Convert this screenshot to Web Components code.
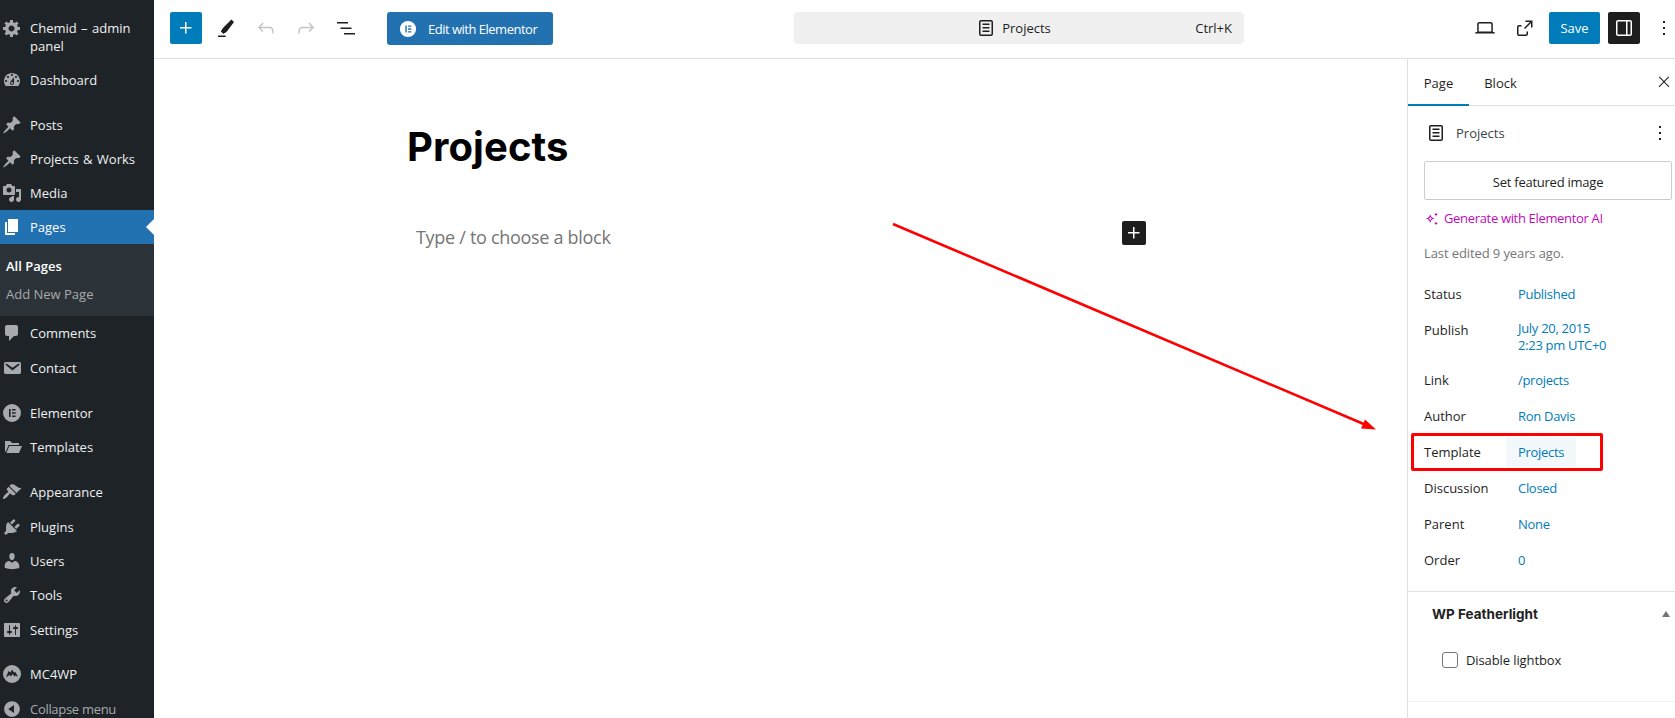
<!DOCTYPE html>
<html lang="en">
<head>
<meta charset="utf-8">
<title>Edit Page</title>
<style>
html, body { margin: 0; height: 718px; overflow: hidden; background: #fff; }
</style>
</head>
<body>
<edit-page></edit-page>
<script>
const ICONS = {
    gear: "M18 12h-2.18c-.17.7-.44 1.35-.81 1.93l1.54 1.54-2.1 2.1-1.54-1.54c-.58.36-1.23.63-1.91.79V19H8v-2.18c-.68-.16-1.33-.43-1.91-.79l-1.54 1.54-2.12-2.12 1.54-1.54c-.36-.58-.63-1.23-.79-1.91H1V9.03h2.17c.16-.7.44-1.35.8-1.94L2.43 5.55l2.1-2.1 1.54 1.54c.58-.37 1.24-.64 1.93-.81V2h3v2.18c.68.16 1.33.43 1.91.79l1.54-1.54 2.12 2.12-1.54 1.54c.36.59.64 1.24.8 1.94H18V12zm-8.5 1.5c1.66 0 3-1.34 3-3s-1.34-3-3-3-3 1.34-3 3 1.34 3 3 3z",
    dashboard: "M3.76 16h12.48c1.1-1.37 1.76-3.11 1.76-5 0-4.42-3.58-8-8-8s-8 3.58-8 8c0 1.89.66 3.63 1.76 5zM10 4c.55 0 1 .45 1 1s-.45 1-1 1-1-.45-1-1 .45-1 1-1zM6 6c.55 0 1 .45 1 1s-.45 1-1 1-1-.45-1-1 .45-1 1-1zm8 0c.55 0 1 .45 1 1s-.45 1-1 1-1-.45-1-1 .45-1 1-1zm-5.37 5.55L12 7v6c0 1.1-.9 2-2 2s-2-.9-2-2c0-.57.24-1.08.63-1.45zM4 10c.55 0 1 .45 1 1s-.45 1-1 1-1-.45-1-1 .45-1 1-1zm12 0c.55 0 1 .45 1 1s-.45 1-1 1-1-.45-1-1 .45-1 1-1zm-5 3c0-.55-.45-1-1-1s-1 .45-1 1 .45 1 1 1 1-.45 1-1z",
    pin: "M10.44 3.02l1.82-1.82 6.36 6.35-1.83 1.82c-1.05-.68-2.48-.57-3.41.36l-.75.75c-.92.93-1.04 2.35-.35 3.41l-1.83 1.82-2.41-2.41-2.8 2.79c-.42.42-3.38 2.71-3.8 2.29s1.86-3.39 2.28-3.81l2.79-2.79L4.1 9.36l1.83-1.82c1.05.69 2.48.57 3.4-.36l.75-.75c.93-.92 1.05-2.35.36-3.41z",
    media: "M13 11V4c0-.55-.45-1-1-1h-1.67L9 1H5L3.67 3H2c-.55 0-1 .45-1 1v7c0 .55.45 1 1 1h10c.55 0 1-.45 1-1zM7 4.5c1.38 0 2.5 1.12 2.5 2.5S8.38 9.5 7 9.5 4.5 8.38 4.5 7 5.62 4.5 7 4.5zM14 6h5v10.5c0 1.38-1.12 2.5-2.5 2.5S14 17.88 14 16.5s1.12-2.5 2.5-2.5c.17 0 .34.02.5.05V9h-3V6zm-4 8.05V13h2v3.5c0 1.38-1.12 2.5-2.5 2.5S7 17.88 7 16.5 8.12 14 9.5 14c.17 0 .34.02.5.05z",
    page: "M6 15V2h10v13H6zm-1 1h8v2H3V5h2v11z",
    comment: "M5 2h9c1.1 0 2 .9 2 2v7c0 1.1-.9 2-2 2h-2l-5 5v-5H5c-1.1 0-2-.9-2-2V4c0-1.1.9-2 2-2z",
    email: "M3.87 4h13.25C18.37 4 19 4.59 19 5.79v8.42c0 1.19-.63 1.79-1.88 1.79H3.87c-1.25 0-1.88-.6-1.88-1.79V5.79c0-1.2.63-1.79 1.88-1.79zm6.62 8.6l6.74-5.53c.24-.2.43-.66.13-1.07-.29-.41-.82-.42-1.17-.17l-5.7 3.86L4.8 5.83c-.35-.25-.88-.24-1.17.17-.3.41-.11.87.13 1.07z",
    elementor: "M10 1a9 9 0 1 0 0 18a9 9 0 0 0 0-18zM7 6h1.6v8H7zM10 6h3.6v1.6H10zM10 9.2h3.6v1.6H10zM10 12.4h3.6V14H10z",
    folder: "M3 4h5l2 2h7v2H6.5L4 14.5H3zM7.3 9H20l-3 7H4.4z",
    brush: "M14.48 11.06L7.41 3.99l1.5-1.5c.5-.56 2.3-.47 3.51.32 1.21.8 1.43 1.28 2.91 2.1 1.18.64 2.45 1.26 4.45.85zm-.71.71L6.7 4.7 4.93 6.47c-.39.39-.39 1.02 0 1.41l1.06 1.06c.39.39.39 1.03 0 1.42-.6.6-1.43 1.11-2.21 1.69-.35.26-.7.53-1.01.84-1.03 1.03-2.37 3.4-1.77 4s2.97-.74 4-1.77c.31-.31.58-.66.84-1.01.58-.78 1.09-1.61 1.69-2.21.39-.39 1.02-.39 1.41 0l1.06 1.06c.39.39 1.02.39 1.41 0l.59.57z",
    plugin: "M13.11 4.36L9.87 7.6 8 5.73l3.24-3.24c.35-.34 1.05-.2 1.56.32.52.51.66 1.21.31 1.55zm-8 1.77l.91-1.12 9.01 9.01-1.19.84c-.71.71-2.63 1.16-3.82 1.16H6.14L4.9 17.26c-.59.59-1.54.59-2.12 0-.59-.58-.59-1.53 0-2.12l1.24-1.24v-3.88c0-1.13.4-3.19 1.09-3.89zm7.26 3.97l3.24-3.24c.34-.35 1.04-.21 1.55.31.52.51.66 1.21.31 1.55l-3.24 3.25z",
    users: "M10 9.25c-2.27 0-2.73-3.44-2.73-3.44C7 4.02 7.82 2 9.97 2c2.16 0 2.98 2.02 2.71 3.81 0 0-.41 3.44-2.68 3.44zm0 2.57L12.72 10c2.39 0 4.52 2.33 4.52 4.53v2.49s-3.65 1.13-7.24 1.13c-3.65 0-7.24-1.13-7.24-1.13v-2.49c0-2.25 1.94-4.48 4.47-4.48z",
    tools: "M16.68 9.77c-1.34 1.34-3.3 1.67-4.95.99l-5.41 6.52c-.99.99-2.59.99-3.58 0s-.99-2.59 0-3.57l6.52-5.42c-.68-1.65-.35-3.61.99-4.95 1.28-1.28 3.12-1.62 4.72-1.06l-2.89 2.89 2.82 2.82 2.86-2.87c.53 1.58.18 3.39-1.08 4.65zM3.81 16.21c.4.39 1.04.39 1.43 0 .4-.4.4-1.04 0-1.43-.39-.4-1.03-.4-1.43 0-.39.39-.39 1.03 0 1.43z",
    settings: "M18 16V4c0-.55-.45-1-1-1H3c-.55 0-1 .45-1 1v12c0 .55.45 1 1 1h14c.55 0 1-.45 1-1zM8 11h1c.55 0 1 .45 1 1s-.45 1-1 1H8v1.5c0 .28-.22.5-.5.5s-.5-.22-.5-.5V13H6c-.55 0-1-.45-1-1s.45-1 1-1h1V5.5c0-.28.22-.5.5-.5s.5.22.5.5V11zm5-2h-1c-.55 0-1-.45-1-1s.45-1 1-1h1V5.5c0-.28.22-.5.5-.5s.5.22.5.5V7h1c.55 0 1 .45 1 1s-.45 1-1 1h-1v5.5c0 .28-.22.5-.5.5s-.5-.22-.5-.5V9z",
    mc4wp: "M10 1a9 9 0 1 0 0 18a9 9 0 0 0 0-18zM4 13.5 6.5 7 8.5 8.5 10 5.5 12 8.5 13.5 8 16 13 13.5 11.5 12.5 12.5 10.5 10 9 12.5 7.5 11z",
    collapse: "M10 2.16c4.33 0 7.84 3.51 7.84 7.84s-3.51 7.84-7.84 7.84S2.16 14.33 2.16 10 5.71 2.16 10 2.16zm2 11.72V6.12L6.18 9.97z",
    plus: "M11 12.5V17.5H12.5V12.5H17.5V11H12.5V6H11V11H6V12.5H11Z",
    pen: "M20 6.1 17.4 3.6 9.2 11.8c-.9.9-1.4 2.4-2.4 3.5l2.6 2.6c1.1-.9 2.6-1.5 3.5-2.4zM4 19.6h7.6V21H4z",
    undo: "M18.3 11.7c-.6-.6-1.4-.9-2.3-.9H6.7l2.9-3.3-1.1-1-4.5 5L8.5 16l1-1-2.7-2.7H16c.5 0 .9.2 1.3.5 1 1 1 3.4 1 4.5v.3h1.5v-.2c0-1.5 0-4.3-1.5-5.7z",
    redo: "M15.6 6.5l-1.1 1 2.9 3.3H8c-.9 0-1.7.3-2.3.9-1.4 1.5-1.4 4.2-1.4 5.6v.2h1.5v-.3c0-1.1 0-3.5 1-4.5.3-.3.7-.5 1.3-.5h9.2L14.5 15l1.1 1.1 4.6-4.6-4.6-5z",
    list: "M3 6h11v1.5H3V6Zm3.5 5.5h11V13h-11v-1.5ZM21 17H10v1.5h11V17Z",
    doc: "M15.5 7.5h-7V9h7V7.5Zm-7 3.5h7v1.5h-7V11Zm7 3.5h-7V16h7v-1.5ZM17 4H7a2 2 0 0 0-2 2v12a2 2 0 0 0 2 2h10a2 2 0 0 0 2-2V6a2 2 0 0 0-2-2Zm-10 1.5h10c.3 0 .5.2.5.5v12c0 .3-.2.5-.5.5H7a.5.5 0 0 1-.5-.5V6c0-.3.2-.5.5-.5Z",
    laptop: "M20.5 16h-.7V8c0-1.1-.9-2-2-2H6.2c-1.1 0-2 .9-2 2v8h-.7c-.8 0-1.5.7-1.5 1.5h20c0-.8-.7-1.5-1.5-1.5zM5.7 8c0-.3.2-.5.5-.5h11.6c.3 0 .5.2.5.5v7.6H5.7V8z",
    external: "M19.5 4.5h-7V6h4.44l-5.97 6.01 1.06 1.06L18 7.08v4.42h1.5v-7ZM13.5 18a.5.5 0 0 1-.5.5H6a.5.5 0 0 1-.5-.5v-7a.5.5 0 0 1 .5-.5h2.5V9H6a2 2 0 0 0-2 2v7a2 2 0 0 0 2 2h7a2 2 0 0 0 2-2v-2.5h-1.5V18Z",
    sidebar: "M18 4H6c-1.1 0-2 .9-2 2v12c0 1.1.9 2 2 2h12c1.1 0 2-.9 2-2V6c0-1.1-.9-2-2-2zm-4 14.5H6c-.3 0-.5-.2-.5-.5V6c0-.3.2-.5.5-.5h8v13zm4.5-.5c0 .3-.2.5-.5.5h-2.5v-13H18c.3 0 .5.2.5.5v12z",
    more: "M13 19h-2v-2h2v2zm0-6h-2v-2h2v2zm0-6h-2V5h2v2z",
    close: "M13 11.8l6.1-6.3-1-1-6.1 6.2-6.1-6.3-1 1 6.1 6.3-6.5 6.7 1 1 6.5-6.6 6.5 6.6 1-1z",
    sparkle: "M7 4.5c.5 3 2 4.6 5 5.2-3 .6-4.5 2.2-5 5.3-.5-3.1-2-4.7-5-5.3 3-.6 4.5-2.2 5-5.2zm0 3c-.4 1-1 1.7-2 2.2 1 .5 1.6 1.2 2 2.2.4-1 1-1.7 2-2.2-1-.5-1.6-1.2-2-2.2zM13.5 3l.7 1.3 1.3.7-1.3.7-.7 1.3-.7-1.3-1.3-.7 1.3-.7zM13.5 13l.7 1.3 1.3.7-1.3.7-.7 1.3-.7-1.3-1.3-.7 1.3-.7z"
};

const UI_FONT = '"Open Sans", "Noto Sans", sans-serif';

function svgIcon(name, size, box) {
    return `<svg width="${size}" height="${size}" viewBox="0 0 ${box} ${box}" fill="currentColor" fill-rule="evenodd"><path d="${ICONS[name]}"/></svg>`;
}

class WpElement extends HTMLElement {
    constructor() {
        super();
        this.attachShadow({ mode: "open" });
    }
    connectedCallback() {
        this.shadowRoot.innerHTML = this.render();
    }
    attr(name, fallback = "") {
        return this.hasAttribute(name) ? this.getAttribute(name) : fallback;
    }
}

class AdminItem extends WpElement {
    render() {
        return `<style>
:host { display: flex; align-items: center; height: 34px; padding-left: 2px; gap: 8px; color: #f0f0f1; position: relative; white-space: nowrap; }
:host([current]) { background: #2271b1; color: #fff; }
:host([current])::after { content: ""; position: absolute; right: 0; top: 9px; border: 8px solid transparent; border-right-color: #fff; border-left-width: 0; }
:host([dim]) { color: #a7aaad; letter-spacing: -.3px; }
.ic { width: 20px; height: 20px; color: #a7aaad; flex: none; }
:host([current]) .ic { color: #fff; }
svg { display: block; }
</style><span class="ic">${svgIcon(this.attr("icon"), 20, 20)}</span><span><slot></slot></span>`;
    }
}

class AdminMenu extends WpElement {
    render() {
        return `<style>
:host { display: block; width: 154px; height: 718px; background: #1d2327; font: 13px/18px ${UI_FONT}; overflow: hidden; }
.site { display: flex; gap: 8px; padding: 19px 0 8px 2px; color: #f0f0f1; word-spacing: 1px; }
.site .ic { width: 20px; color: #a7aaad; margin-top: -1px; }
.site svg { display: block; }
.sep { height: 11px; }
.sep.t { height: 10px; }
.sub { background: #2c3338; padding: 8px 0 0; height: 64px; }
.sub div { height: 28px; line-height: 28px; padding-left: 6px; color: #a7aaad; }
.sub .on { color: #fff; font-weight: 600; }
.l { height: 34.4px; }
.low { margin-top: 1px; }
.wide { word-spacing: 1px; }
</style>
<div class="site"><span class="ic">${svgIcon("gear", 20, 20)}</span><span>Chemid – admin<br>panel</span></div>
<admin-item icon="dashboard">Dashboard</admin-item>
<div class="sep"></div>
<admin-item icon="pin">Posts</admin-item>
<admin-item class="wide" icon="pin">Projects &amp; Works</admin-item>
<admin-item icon="media">Media</admin-item>
<admin-item icon="page" current>Pages</admin-item>
<div class="sub"><div class="on">All Pages</div><div>Add New Page</div></div>
<admin-item icon="comment">Comments</admin-item>
<admin-item class="low" icon="email">Contact</admin-item>
<div class="sep"></div>
<admin-item icon="elementor">Elementor</admin-item>
<admin-item icon="folder">Templates</admin-item>
<div class="sep"></div>
<admin-item class="l" icon="brush">Appearance</admin-item>
<admin-item class="l" icon="plugin">Plugins</admin-item>
<admin-item class="l" icon="users">Users</admin-item>
<admin-item class="l" icon="tools">Tools</admin-item>
<admin-item class="l" icon="settings">Settings</admin-item>
<div class="sep t"></div>
<admin-item class="l" icon="mc4wp">MC4WP</admin-item>
<admin-item class="l" icon="collapse" dim>Collapse menu</admin-item>`;
    }
}

class ToolButton extends WpElement {
    render() {
        return `<style>
:host { display: flex; align-items: center; justify-content: center; width: 32px; height: 32px; flex: none; border-radius: 2px; color: #1e1e1e; }
:host([primary]) { background: #007cba; color: #fff; }
:host([dark]) { background: #1e1e1e; color: #fff; }
:host([off]) { color: #c4c4c4; }
svg { display: block; }
</style>${svgIcon(this.attr("icon"), 24, 24)}`;
    }
}

class EditorToolbar extends WpElement {
    render() {
        return `<style>
:host { display: flex; align-items: flex-start; gap: 8px; height: 46px; padding: 12px 0 0 16px; border-bottom: 1px solid #e0e0e0; font: 13px/18px ${UI_FONT}; background: #fff; overflow: hidden; white-space: nowrap; }
.elementor { display: flex; align-items: center; gap: 11px; height: 33px; margin-left: 17px; padding: 0 0 0 12px; background: #2271b1; color: #fff; border-radius: 3px; flex: none; box-sizing: border-box; width: 166px; }
.elementor svg { display: block; }
.elementor span { letter-spacing: -.5px; }
.doc { position: relative; display: flex; align-items: center; justify-content: center; gap: 4px; flex: none; width: 450px; height: 32px; margin-left: 233px; padding-right: 13px; box-sizing: border-box; background: #f0f0f0; border-radius: 4px; color: #1e1e1e; }
.doc svg { display: block; }
.doc kbd { position: absolute; right: 12px; font: inherit; color: #1e1e1e; }
.end { margin-left: 217px; }
.save { flex: none; width: 51px; height: 32px; line-height: 32px; text-align: center; background: #007cba; color: #fff; border-radius: 2px; }
</style>
<tool-button icon="plus" primary></tool-button>
<tool-button icon="pen"></tool-button>
<tool-button icon="undo" off></tool-button>
<tool-button icon="redo" off></tool-button>
<tool-button icon="list"></tool-button>
<div class="elementor">${svgIcon("elementor", 18, 20)}<span>Edit with Elementor</span></div>
<div class="doc">${svgIcon("doc", 24, 24)}<span>Projects</span><kbd>Ctrl+K</kbd></div>
<tool-button class="end" icon="laptop"></tool-button>
<tool-button icon="external"></tool-button>
<div class="save">Save</div>
<tool-button icon="sidebar" dark></tool-button>
<tool-button icon="more"></tool-button>`;
    }
}

class EditorCanvas extends WpElement {
    render() {
        return `<style>
:host { display: block; flex: 1; min-width: 0; padding-top: 64px; background: #fff; }
.col { width: 747px; margin: 0 auto; }
h1 { margin: 0; font: 700 40px/48px Inter, "Liberation Sans", sans-serif; color: #000; letter-spacing: .1px; }
.para { display: flex; justify-content: space-between; align-items: flex-start; margin-top: 50px; padding: 0 8px 0 9px; }
.hint { font: 18px/32px ${UI_FONT}; color: #757575; letter-spacing: -.3px; }
.add { display: flex; align-items: center; justify-content: center; width: 24px; height: 24px; background: #1e1e1e; color: #fff; border-radius: 2px; }
.add svg { display: block; }
</style>
<div class="col"><h1>Projects</h1>
<div class="para"><span class="hint">Type / to choose a block</span><span class="add">${svgIcon("plus", 24, 24)}</span></div></div>`;
    }
}

class MetaRow extends WpElement {
    render() {
        return `<style>
:host { display: flex; height: 36px; line-height: 36px; padding-left: 16px; color: #1e1e1e; }
:host([tall]) { height: 50px; }
.k { width: 82px; flex: none; }
.v { padding: 0 12px; color: #007cba; height: 36px; letter-spacing: -.3px; }
:host([tall]) .v { line-height: 17px; padding-top: 7.5px; height: auto; }
:host([hot]) .v { background: #f3f8fb; height: 30px; line-height: 30px; margin-top: 3px; }
</style><span class="k">${this.attr("label")}</span><span class="v"><slot></slot></span>`;
    }
}

class PageSidebar extends WpElement {
    render() {
        return `<style>
:host { display: block; flex: none; width: 267px; height: 659px; border-left: 1px solid #e0e0e0; font: 13px/18px ${UI_FONT}; color: #1e1e1e; background: #fff; overflow: hidden; }
svg { display: block; }
.tabs { display: flex; align-items: stretch; height: 46px; border-bottom: 1px solid #e0e0e0; position: relative; }
.tab { display: flex; align-items: center; justify-content: center; height: 46px; padding-top: 1px; box-sizing: border-box; }
.tab.on { width: 61px; box-shadow: inset 0 -2px 0 #007cba; margin-bottom: -1px; height: 47px; }
.tab.b { width: 61px; margin-left: 1px; }
.tabs .x { margin: 11px -1px 0 auto; width: 24px; height: 24px; }
.x svg { transform: scale(.72); }
.head { display: flex; align-items: center; height: 53px; margin-bottom: 2px; padding: 0 3px 0 16px; gap: 8px; box-sizing: border-box; }
.head .dots { margin-left: auto; }
.head .name { flex: none; color: #3c434a; }
.feat { margin: 0 0 0 16px; width: 248px; height: 39px; line-height: 40px; border: 1px solid #ccc; border-radius: 2px; box-sizing: border-box; text-align: center; letter-spacing: -.24px; overflow: hidden; }
.ai { display: flex; align-items: center; gap: 4px; padding-left: 16px; margin-top: 9px; height: 18px; color: #c00bb9; letter-spacing: -.33px; }
.edited { margin: 17px 0 0 16px; color: #757575; height: 18px; letter-spacing: -.1px; }
.rows { margin-top: 14px; }
.sect { border-top: 1px solid #e0e0e0; margin-top: 13px; height: 109px; border-bottom: 1px solid #f0f0f0; position: relative; }
.sect h2 { margin: 0; padding: 13px 0 0 24px; font: 700 13.5px/18px Inter, "Liberation Sans", sans-serif; color: #1e1e1e; }
.tri { position: absolute; right: 5px; top: 19px; border: 4px solid transparent; border-top: 0; border-bottom: 6px solid #757575; }
.chk { display: flex; align-items: center; gap: 8px; padding: 28px 0 0 34px; letter-spacing: -.1px; }
.box { width: 16px; height: 16px; box-sizing: border-box; border: 1px solid #757575; border-radius: 3px; flex: none; }
</style>
<div class="tabs"><div class="tab on">Page</div><div class="tab b">Block</div><span class="x">${svgIcon("close", 24, 24)}</span></div>
<div class="head">${svgIcon("doc", 24, 24)}<span class="name">Projects</span><span class="dots">${svgIcon("more", 24, 24)}</span></div>
<div class="feat">Set featured image</div>
<div class="ai">${svgIcon("sparkle", 16, 18)}<span>Generate with Elementor AI</span></div>
<div class="edited">Last edited 9 years ago.</div>
<div class="rows">
<meta-row label="Status">Published</meta-row>
<meta-row label="Publish" tall>July 20, 2015<br>2:23 pm UTC+0</meta-row>
<meta-row label="Link">/projects</meta-row>
<meta-row label="Author">Ron Davis</meta-row>
<meta-row label="Template" hot>Projects</meta-row>
<meta-row label="Discussion">Closed</meta-row>
<meta-row label="Parent">None</meta-row>
<meta-row label="Order">0</meta-row>
</div>
<div class="sect"><h2>WP Featherlight</h2><span class="tri"></span>
<div class="chk"><span class="box"></span><span>Disable lightbox</span></div></div>`;
    }
}

class RedMarks extends WpElement {
    render() {
        return `<style>
:host { position: absolute; left: 0; top: 0; width: 1675px; height: 718px; pointer-events: none; }
svg { position: absolute; left: 0; top: 0; }
.box { position: absolute; left: 1411px; top: 433px; width: 192px; height: 38px; box-sizing: border-box; border: 3px solid #f00; border-radius: 2px; }
</style>
<svg width="1675" height="718"><line x1="893" y1="224" x2="1366" y2="425" stroke="#f00" stroke-width="2.6"/><polygon points="1376,429.5 1361,428.6 1365,419.6" fill="#f00"/></svg>
<div class="box"></div>`;
    }
}

class EditPage extends WpElement {
    render() {
        return `<style>
:host { display: flex; position: relative; width: 1675px; height: 718px; overflow: hidden; }
.main { flex: 1; min-width: 0; display: flex; flex-direction: column; }
.body { display: flex; flex: 1; min-height: 0; }
</style>
<admin-menu></admin-menu>
<div class="main"><editor-toolbar></editor-toolbar>
<div class="body"><editor-canvas></editor-canvas><page-sidebar></page-sidebar></div></div>
<red-marks></red-marks>`;
    }
}

customElements.define("admin-item", AdminItem);
customElements.define("admin-menu", AdminMenu);
customElements.define("tool-button", ToolButton);
customElements.define("editor-toolbar", EditorToolbar);
customElements.define("editor-canvas", EditorCanvas);
customElements.define("meta-row", MetaRow);
customElements.define("page-sidebar", PageSidebar);
customElements.define("red-marks", RedMarks);
customElements.define("edit-page", EditPage);
</script>
</body>
</html>
